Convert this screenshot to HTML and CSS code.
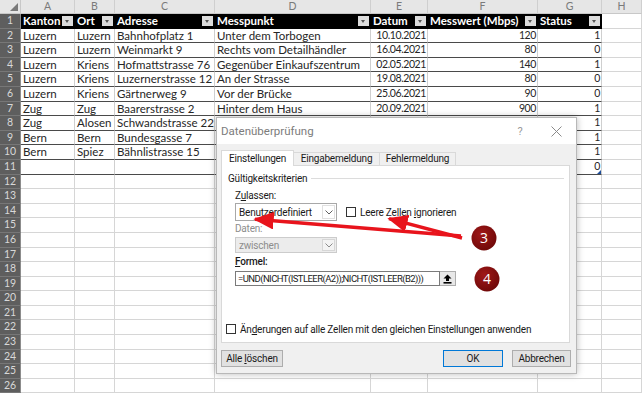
FILE: index.html
```html
<!DOCTYPE html>
<html lang="de">
<head>
<meta charset="utf-8">
<title>Datenüberprüfung</title>
<link rel="stylesheet" href="styles.css">
</head>
<body>
<div class="screen">
  <div class="sheet">
    <div class="c corner"><span class="corner-tri"></span></div>
    <div class="c ch">A</div><div class="c ch">B</div><div class="c ch">C</div><div class="c ch">D</div><div class="c ch">E</div><div class="c ch">F</div><div class="c ch">G</div><div class="c ch">H</div>

    <div class="c rh">1</div>
    <div class="c th">Kanton<span class="flt"></span></div>
    <div class="c th">Ort<span class="flt"></span></div>
    <div class="c th">Adresse<span class="flt"></span></div>
    <div class="c th">Messpunkt<span class="flt"></span></div>
    <div class="c th">Datum<span class="flt"></span></div>
    <div class="c th">Messwert (Mbps)<span class="flt"></span></div>
    <div class="c th">Status<span class="flt"></span></div>
    <div class="c"></div>

    <div class="c rh">2</div><div class="c tb">Luzern</div><div class="c tb">Luzern</div><div class="c tb">Bahnhofplatz 1</div><div class="c tb">Unter dem Torbogen</div><div class="c tb num">10.10.2021</div><div class="c tb num">120</div><div class="c tb num">1</div><div class="c"></div>
    <div class="c rh">3</div><div class="c tb">Luzern</div><div class="c tb">Luzern</div><div class="c tb">Weinmarkt 9</div><div class="c tb">Rechts vom Detailhändler</div><div class="c tb num">16.04.2021</div><div class="c tb num">80</div><div class="c tb num">0</div><div class="c"></div>
    <div class="c rh">4</div><div class="c tb">Luzern</div><div class="c tb">Kriens</div><div class="c tb">Hofmattstrasse 76</div><div class="c tb">Gegenüber Einkaufszentrum</div><div class="c tb num">02.05.2021</div><div class="c tb num">140</div><div class="c tb num">1</div><div class="c"></div>
    <div class="c rh">5</div><div class="c tb">Luzern</div><div class="c tb">Kriens</div><div class="c tb">Luzernerstrasse 12</div><div class="c tb">An der Strasse</div><div class="c tb num">19.08.2021</div><div class="c tb num">80</div><div class="c tb num">0</div><div class="c"></div>
    <div class="c rh">6</div><div class="c tb">Luzern</div><div class="c tb">Kriens</div><div class="c tb">Gärtnerweg 9</div><div class="c tb">Vor der Brücke</div><div class="c tb num">25.06.2021</div><div class="c tb num">90</div><div class="c tb num">0</div><div class="c"></div>
    <div class="c rh">7</div><div class="c tb">Zug</div><div class="c tb">Zug</div><div class="c tb">Baarerstrasse 2</div><div class="c tb">Hinter dem Haus</div><div class="c tb num">20.09.2021</div><div class="c tb num">900</div><div class="c tb num">1</div><div class="c"></div>
    <div class="c rh">8</div><div class="c tb">Zug</div><div class="c tb">Alosen</div><div class="c tb">Schwandstrasse 22</div><div class="c tb"></div><div class="c tb num"></div><div class="c tb num"></div><div class="c tb num">1</div><div class="c"></div>
    <div class="c rh">9</div><div class="c tb">Bern</div><div class="c tb">Bern</div><div class="c tb">Bundesgasse 7</div><div class="c tb"></div><div class="c tb num"></div><div class="c tb num"></div><div class="c tb num">1</div><div class="c"></div>
    <div class="c rh">10</div><div class="c tb">Bern</div><div class="c tb">Spiez</div><div class="c tb">Bähnlistrasse 15</div><div class="c tb"></div><div class="c tb num"></div><div class="c tb num"></div><div class="c tb num">1</div><div class="c"></div>
    <div class="c rh">11</div><div class="c tb"></div><div class="c tb"></div><div class="c tb"></div><div class="c tb"></div><div class="c tb num"></div><div class="c tb num"></div><div class="c tb num last">0</div><div class="c"></div>

    <div class="c rh">12</div><div class="c"></div><div class="c"></div><div class="c"></div><div class="c"></div><div class="c"></div><div class="c"></div><div class="c"></div><div class="c"></div>
    <div class="c rh">13</div><div class="c"></div><div class="c"></div><div class="c"></div><div class="c"></div><div class="c"></div><div class="c"></div><div class="c"></div><div class="c"></div>
    <div class="c rh">14</div><div class="c"></div><div class="c"></div><div class="c"></div><div class="c"></div><div class="c"></div><div class="c"></div><div class="c"></div><div class="c"></div>
    <div class="c rh">15</div><div class="c"></div><div class="c"></div><div class="c"></div><div class="c"></div><div class="c"></div><div class="c"></div><div class="c"></div><div class="c"></div>
    <div class="c rh">16</div><div class="c"></div><div class="c"></div><div class="c"></div><div class="c"></div><div class="c"></div><div class="c"></div><div class="c"></div><div class="c"></div>
    <div class="c rh">17</div><div class="c"></div><div class="c"></div><div class="c"></div><div class="c"></div><div class="c"></div><div class="c"></div><div class="c"></div><div class="c"></div>
    <div class="c rh">18</div><div class="c"></div><div class="c"></div><div class="c"></div><div class="c"></div><div class="c"></div><div class="c"></div><div class="c"></div><div class="c"></div>
    <div class="c rh">19</div><div class="c"></div><div class="c"></div><div class="c"></div><div class="c"></div><div class="c"></div><div class="c"></div><div class="c"></div><div class="c"></div>
    <div class="c rh">20</div><div class="c"></div><div class="c"></div><div class="c"></div><div class="c"></div><div class="c"></div><div class="c"></div><div class="c"></div><div class="c"></div>
    <div class="c rh">21</div><div class="c"></div><div class="c"></div><div class="c"></div><div class="c"></div><div class="c"></div><div class="c"></div><div class="c"></div><div class="c"></div>
    <div class="c rh">22</div><div class="c"></div><div class="c"></div><div class="c"></div><div class="c"></div><div class="c"></div><div class="c"></div><div class="c"></div><div class="c"></div>
    <div class="c rh">23</div><div class="c"></div><div class="c"></div><div class="c"></div><div class="c"></div><div class="c"></div><div class="c"></div><div class="c"></div><div class="c"></div>
    <div class="c rh">24</div><div class="c"></div><div class="c"></div><div class="c"></div><div class="c"></div><div class="c"></div><div class="c"></div><div class="c"></div><div class="c"></div>
    <div class="c rh">25</div><div class="c"></div><div class="c"></div><div class="c"></div><div class="c"></div><div class="c"></div><div class="c"></div><div class="c"></div><div class="c"></div>
    <div class="c rh">26</div><div class="c"></div><div class="c"></div><div class="c"></div><div class="c"></div><div class="c"></div><div class="c"></div><div class="c"></div><div class="c"></div>
  </div>

  <div class="dialog">
    <div class="titlebar">
      <span class="title">Datenüberprüfung</span>
      <span class="help">?</span>
      <span class="close"><svg width="11" height="11" viewBox="0 0 11 11"><path d="M0.5 0.5L10.5 10.5M10.5 0.5L0.5 10.5" stroke="#8a8a8a" stroke-width="1" fill="none"/></svg></span>
    </div>
    <div class="tabs">
      <div class="tab active">Einstellungen</div>
      <div class="tab t2">Eingabemeldung</div>
      <div class="tab t3">Fehlermeldung</div>
    </div>
    <div class="panel">
      <div class="group-title"><span>Gültigkeitskriterien</span><span class="rule"></span></div>
      <div class="group">
        <div class="lbl l-zul">Z<u>u</u>lassen:</div>
        <div class="allow-row">
          <div class="select"><span class="val">Benutzerdefiniert</span><span class="drop"><svg width="8" height="5" viewBox="0 0 8 5"><path d="M0.5 0.5L4 4L7.5 0.5" stroke="#606060" fill="none"/></svg></span></div>
          <div class="check ign"><span class="box"></span><span>Leere Zellen <u>i</u>gnorieren</span></div>
        </div>
        <div class="lbl l-dat">Daten:</div>
        <div class="select off"><span class="val">zwischen</span><span class="drop"><svg width="8" height="5" viewBox="0 0 8 5"><path d="M0.5 0.5L4 4L7.5 0.5" stroke="#8a8a8a" fill="none"/></svg></span></div>
        <div class="lbl l-form"><u>F</u>ormel:</div>
        <div class="formula">
          <div class="input">=UND(NICHT(ISTLEER(A2));NICHT(ISTLEER(B2)))</div>
          <div class="refbtn"><svg width="9" height="10" viewBox="0 0 9 10"><path d="M4.5 0.5L8.5 4.5H6V7H3V4.5H0.5Z" fill="#000"/><rect x="0.5" y="8" width="8" height="1.6" fill="#000"/></svg></div>
        </div>
      </div>
      <div class="check apply"><span class="box"></span><span>Än<u>d</u>erungen auf alle Zellen mit den gleichen Einstellungen anwenden</span></div>
    </div>
    <div class="buttons">
      <div class="btn b-clear">Alle <u>l</u>öschen</div>
      <div class="spacer"></div>
      <div class="btn b-ok">OK</div>
      <div class="btn b-cancel">Abbrechen</div>
    </div>
  </div>

  <svg class="marks" width="642" height="394" viewBox="0 0 642 394">
    <defs>
      <marker id="ah" markerWidth="6" markerHeight="5.2" refX="5.5" refY="2.6" orient="auto" markerUnits="strokeWidth">
        <path d="M0 0L6 2.6L0 5.2Z" fill="#e8141c"/>
      </marker>
      <radialGradient id="rg" cx="0.4" cy="0.35" r="0.7">
        <stop offset="0" stop-color="#a01818"/>
        <stop offset="1" stop-color="#6e0808"/>
      </radialGradient>
    </defs>
    <line x1="461" y1="236" x2="255" y2="219.2" stroke="#e8141c" stroke-width="3.4" marker-end="url(#ah)"/>
    <line x1="462" y1="238" x2="389" y2="218.6" stroke="#e8141c" stroke-width="3.4" marker-end="url(#ah)"/>
    <circle cx="484" cy="238" r="12.5" fill="url(#rg)"/>
    <text x="484" y="243" class="badge-num">3</text>
    <circle cx="487" cy="279" r="12.5" fill="url(#rg)"/>
    <text x="487" y="284" class="badge-num">4</text>
  </svg>
</div>
</body>
</html>
```

FILE: styles.css
```css
html, body {
  margin: 0;
  padding: 0;
  background: #ffffff;
}
.screen {
  position: relative;
  width: 642px;
  height: 394px;
  overflow: hidden;
}
.sheet {
  display: grid;
  grid-template-columns: 21px 54px 40px 100px 156px 57px 110px 64px 40px;
  grid-template-rows: 14px repeat(26, 14.6px);
  font-family: Lato, "Liberation Sans", sans-serif;
  font-size: 11.5px;
  color: #262626;
}
.c {
  box-sizing: border-box;
  border-right: 1px solid #d6d6d6;
  border-bottom: 1px solid #d6d6d6;
  padding: 0 2px;
  line-height: 13.6px;
  white-space: nowrap;
  overflow: hidden;
}
.corner {
  background: #e6e6e6;
  position: relative;
  border-right: 1px solid #c8c8c8;
  border-bottom: 1px solid #c8c8c8;
}
.corner-tri {
  position: absolute;
  right: 2px;
  bottom: 2px;
  width: 0;
  height: 0;
  border-left: 8px solid transparent;
  border-bottom: 8px solid #7a7a7a;
}
.ch {
  background: #e6e6e6;
  color: #7a7a7a;
  text-align: center;
  font-size: 10.5px;
  line-height: 13px;
  border-right: 1px solid #cfcfcf;
  border-bottom: 1px solid #c8c8c8;
}
.rh {
  background: #5e5e5e;
  color: #d8d8d8;
  text-align: center;
  font-size: 10.5px;
  padding: 0;
  border-right: 1px solid #8c8c8c;
  border-bottom: 1px solid #777777;
}
.th {
  position: relative;
  background: #000000;
  color: #ffffff;
  font-weight: bold;
  border-right: 1px solid #000000;
  border-bottom: 1px solid #000000;
}
.flt {
  position: absolute;
  right: 1px;
  top: 2px;
  width: 11px;
  height: 10px;
  background: #dcdcdc;
}
.flt::after {
  content: "";
  position: absolute;
  left: 3px;
  top: 4px;
  border-left: 2.5px solid transparent;
  border-right: 2.5px solid transparent;
  border-top: 3px solid #555555;
}
.tb {
  border-bottom: 1px solid #4a4a4a;
  border-right: 1px solid #cfcfcf;
}
.num {
  text-align: right;
  font-size: 10.5px;
  letter-spacing: -0.4px;
  padding-right: 1px;
  padding-left: 0;
}
.last {
  position: relative;
}
.last::after {
  content: "";
  position: absolute;
  right: 0;
  bottom: 0;
  border-left: 4px solid transparent;
  border-bottom: 4px solid #1f4e9a;
}

/* Dialog */
.dialog {
  position: absolute;
  left: 216px;
  top: 117px;
  width: 361px;
  height: 257px;
  box-sizing: border-box;
  border: 1px solid #b8b8b8;
  background: #f0f0f0;
  box-shadow: 0 0 7px rgba(0, 0, 0, 0.28);
  font-family: Roboto, "Liberation Sans", sans-serif;
  font-size: 10px;
  letter-spacing: -0.2px;
  color: #1a1a1a;
}
.titlebar {
  height: 26px;
  background: #ffffff;
  display: flex;
  align-items: center;
  padding-left: 4px;
}
.title {
  color: #7c7c7c;
  font-size: 11.5px;
  letter-spacing: 0;
  flex: 1;
}
.help {
  color: #9a9a9a;
  font-size: 11px;
  width: 10px;
  text-align: center;
  margin-right: 26px;
}
.close {
  display: flex;
  width: 11px;
  margin-right: 14px;
}
.tabs {
  display: flex;
  margin-top: 6px;
  padding-left: 4px;
  height: 15px;
  position: relative;
  z-index: 1;
}
.tab {
  box-sizing: border-box;
  height: 13px;
  margin-top: 2px;
  border: 1px solid #d9d9d9;
  border-bottom: none;
  background: #f0f0f0;
  line-height: 12px;
  text-align: center;
  margin-left: -1px;
}
.tab.active {
  width: 73px;
  height: 16px;
  margin-top: 0;
  margin-left: 0;
  background: #ffffff;
  line-height: 16px;
}
.t2 { width: 87px; }
.t3 { width: 77px; }
.panel {
  box-sizing: border-box;
  margin-left: 4px;
  width: 349px;
  height: 178px;
  background: #ffffff;
  border: 1px solid #d9d9d9;
}
.group-title {
  height: 24px;
  display: flex;
  align-items: center;
  padding-left: 6px;
  padding-right: 5px;
}
.rule {
  flex: 1;
  height: 0;
  border-top: 1px solid #dcdcdc;
  margin-left: 4px;
}
.group {
  padding-left: 13px;
}
.lbl {
  white-space: nowrap;
}
.l-zul { height: 12px; line-height: 12px; margin-bottom: 1px; }
.l-dat { height: 16px; line-height: 16px; color: #8d8d8d; }
.l-form { height: 18px; line-height: 18px; font-weight: 500; }
.allow-row {
  display: flex;
  align-items: center;
  height: 18px;
}
.select {
  box-sizing: border-box;
  width: 102px;
  height: 18px;
  border: 1px solid #a8a8a8;
  background: #ffffff;
  display: flex;
  align-items: center;
  padding-left: 3px;
}
.select .val { flex: 1; }
.drop {
  box-sizing: border-box;
  width: 13px;
  height: 14px;
  margin-right: 1px;
  border: 1px solid #e0e0e0;
  display: flex;
  align-items: center;
  justify-content: center;
}
.select.off {
  height: 16px;
  background: #ececec;
  border-color: #cccccc;
  color: #8d8d8d;
}
.select.off .drop { height: 12px; border-color: #d6d6d6; background: #f3f3f3; }
.check {
  display: flex;
  align-items: center;
  white-space: nowrap;
}
.box {
  box-sizing: border-box;
  width: 10px;
  height: 10px;
  border: 1px solid #333333;
  background: #ffffff;
  margin-right: 4px;
}
.ign { margin-left: 9px; }
.formula {
  display: flex;
  height: 15px;
}
.input {
  box-sizing: border-box;
  width: 205px;
  height: 15px;
  border: 1px solid #7a7a7a;
  background: #ffffff;
  padding-left: 2px;
  line-height: 13px;
  white-space: nowrap;
  overflow: hidden;
  font-size: 9.5px;
  letter-spacing: -0.55px;
}
.refbtn {
  box-sizing: border-box;
  width: 16px;
  height: 15px;
  border: 1px solid #adadad;
  border-left: none;
  background: #e8e8e8;
  display: flex;
  align-items: center;
  justify-content: center;
}
.apply {
  margin-top: 36px;
  height: 14px;
  padding-left: 4px;
}
.buttons {
  display: flex;
  margin-top: 7px;
  padding-left: 4px;
  padding-right: 5px;
}
.spacer { flex: 1; }
.btn {
  box-sizing: border-box;
  height: 17px;
  border: 1px solid #adadad;
  background: #e1e1e1;
  line-height: 15px;
  text-align: center;
  white-space: nowrap;
}
.b-clear { width: 62px; }
.b-ok { width: 60px; border: 1px solid #0078d7; margin-right: 9px; }
.b-cancel { width: 59px; }
.marks {
  position: absolute;
  left: 0;
  top: 0;
}
.badge-num {
  font-family: "Open Sans", "Liberation Sans", sans-serif;
  font-size: 14px;
  fill: #ffffff;
  text-anchor: middle;
}
```
